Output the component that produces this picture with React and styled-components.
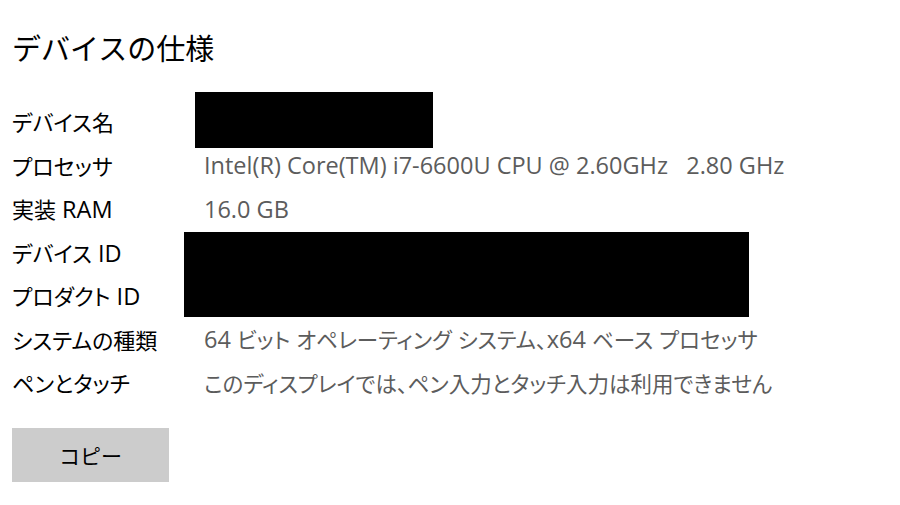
import React from 'react';
import styled, { createGlobalStyle } from 'styled-components';

const GlobalStyle = createGlobalStyle`
  body {
    margin: 0;
    background: #ffffff;
    font-family: "Noto Sans CJK JP", "Noto Sans", sans-serif;
  }
`;

const Page = styled.div`
  width: 900px;
  height: 505px;
  padding: 27px 0 0 12px;
  box-sizing: border-box;
  background: #ffffff;
`;

const Title = styled.h1`
  margin: 0 0 33px 0;
  font-size: 29px;
  line-height: 40px;
  font-weight: 400;
  color: #000000;
`;

const Specs = styled.div`
  display: grid;
  grid-template-columns: 192px 1fr;
  grid-auto-rows: 43.5px;
  align-items: center;
  font-family: "Open Sans", "Noto Sans CJK JP", sans-serif;
  font-size: 23.5px;
`;

const Label = styled.div`
  color: #000000;
  white-space: pre;
`;

const Value = styled.div`
  position: relative;
  color: #5c5c5c;
  white-space: pre;
  height: 100%;
  display: flex;
  align-items: center;
`;

// Japanese runs render a bit smaller with proportional kana
const Jp = styled.span`
  font-family: "Noto Sans CJK JP", sans-serif;
  font-size: ${(p) => p.$size}px;
  font-feature-settings: "palt";
`;

const Redacted = styled.div`
  position: absolute;
  background: #000000;
  left: ${(p) => p.$left}px;
  top: ${(p) => p.$top}px;
  width: ${(p) => p.$width}px;
  height: ${(p) => p.$height}px;
`;

const CopyButton = styled.button`
  margin-top: 23px;
  width: 157px;
  height: 54px;
  border: none;
  background: #cccccc;
  color: #000000;
  font-family: "Noto Sans CJK JP", sans-serif;
  font-size: 21px;
  padding: 0;
`;

const specs = [
  { label: 'デバイス名', value: '', redact: { left: -9, top: -8, width: 238, height: 56 } },
  { label: 'プロセッサ', value: 'Intel(R) Core(TM) i7-6600U CPU @ 2.60GHz   2.80 GHz' },
  { label: '実装 RAM', value: '16.0 GB' },
  { label: 'デバイス ID', value: '', redact: { left: -20, top: 1.5, width: 565, height: 85 } },
  { label: 'プロダクト ID', value: '' },
  { label: 'システムの種類', value: '64 ビット オペレーティング システム、x64 ベース プロセッサ' },
  { label: 'ペンとタッチ', value: 'このディスプレイでは、ペン入力とタッチ入力は利用できません' },
];

function Mixed({ text, size }) {
  return text.split(/([^\x00-\x7F]+)/).map((part, i) =>
    /[^\x00-\x7F]/.test(part) ? <Jp key={i} $size={size}>{part}</Jp> : part
  );
}

export default function App() {
  return (
    <Page>
      <GlobalStyle />
      <Title>デバイスの仕様</Title>
      <Specs>
        {specs.map((s) => (
          <React.Fragment key={s.label}>
            <Label><Mixed text={s.label} size={22} /></Label>
            <Value>
              <span><Mixed text={s.value} size={21.5} /></span>
              {s.redact && (
                <Redacted
                  $left={s.redact.left}
                  $top={s.redact.top}
                  $width={s.redact.width}
                  $height={s.redact.height}
                />
              )}
            </Value>
          </React.Fragment>
        ))}
      </Specs>
      <CopyButton>コピー</CopyButton>
    </Page>
  );
}
